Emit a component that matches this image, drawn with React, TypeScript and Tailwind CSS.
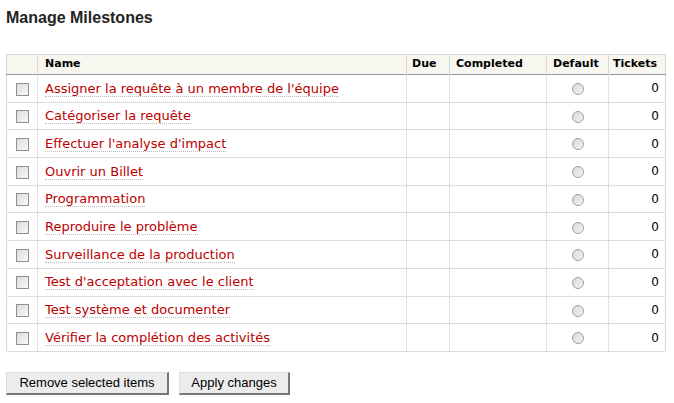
const milestones = [
  "Assigner la requête à un membre de l'équipe",
  "Catégoriser la requête",
  "Effectuer l'analyse d'impact",
  "Ouvrir un Billet",
  "Programmation",
  "Reproduire le problème",
  "Surveillance de la production",
  "Test d'acceptation avec le client",
  "Test système et documenter",
  "Vérifier la complétion des activités",
];

function Check() {
  return (
    <span className="inline-block w-[13px] h-[13px] border border-[#8f8f8f] bg-gradient-to-br from-[#dcdcdc] to-[#f8f8f8] align-middle" />
  );
}

function Radio() {
  return (
    <span className="inline-block w-[12px] h-[12px] rounded-full border border-[#a0a0a0] bg-gradient-to-br from-[#d8d8d8] to-[#f4f4f4] align-middle" />
  );
}

export default function App() {
  return (
    <div className="w-[674px] h-[403px] bg-white px-[6px] pt-[9px] font-['Verdana','DejaVu_Sans',sans-serif] text-black">
      <h2 className="font-['Liberation_Sans',Arial,sans-serif] font-bold text-[16px] leading-[18px] text-[#222]">
        Manage Milestones
      </h2>
      <table className="mt-[27px] table-fixed border-collapse w-[659px] border border-[#d7d7d7]">
        <colgroup>
          <col className="w-[31px]" />
          <col className="w-[369px]" />
          <col className="w-[43px]" />
          <col className="w-[97px]" />
          <col className="w-[62px]" />
          <col className="w-[57px]" />
        </colgroup>
        <thead>
          <tr className="bg-[#f7f7f0] h-[20px] text-[11px] font-bold border-b border-[#999]">
            <th className="border-r border-[#d7d7d7]" />
            <th className="text-left pl-[7px] border-r border-[#d7d7d7]">Name</th>
            <th className="text-left pl-[5px] border-r border-[#d7d7d7]">Due</th>
            <th className="text-left pl-[6px] border-r border-[#d7d7d7]">Completed</th>
            <th className="text-left pl-[6px] border-r border-[#d7d7d7]">Default</th>
            <th className="text-left pl-[4px]">Tickets</th>
          </tr>
        </thead>
        <tbody className="text-[13px]">
          {milestones.map((m) => (
            <tr key={m} className="h-[27.7px] border-b border-[#ddd]">
              <td className="text-center border-r border-dotted border-[#ccc]">
                <Check />
              </td>
              <td className="pl-[7px] border-r border-dotted border-[#ccc]">
                <a className="text-[#b00] border-b border-dotted border-[#bbb] leading-[15px] inline-block">
                  {m}
                </a>
              </td>
              <td className="border-r border-dotted border-[#ccc]" />
              <td className="border-r border-dotted border-[#ccc]" />
              <td className="text-center border-r border-dotted border-[#ccc]">
                <Radio />
              </td>
              <td className="text-right pr-[6px] text-[12px]">0</td>
            </tr>
          ))}
        </tbody>
      </table>
      <div className="mt-[20px] flex gap-[10px] font-['Liberation_Sans',Arial,sans-serif] text-[13px]">
        <button className="h-[23px] w-[163px] bg-[#ececec] border border-[#ddd] border-r-[#777] border-b-[#777] border-b-2 border-r-2 text-black">
          Remove selected items
        </button>
        <button className="h-[23px] w-[111px] bg-[#ececec] border border-[#ddd] border-r-[#777] border-b-[#777] border-b-2 border-r-2 text-black">
          Apply changes
        </button>
      </div>
    </div>
  );
}
